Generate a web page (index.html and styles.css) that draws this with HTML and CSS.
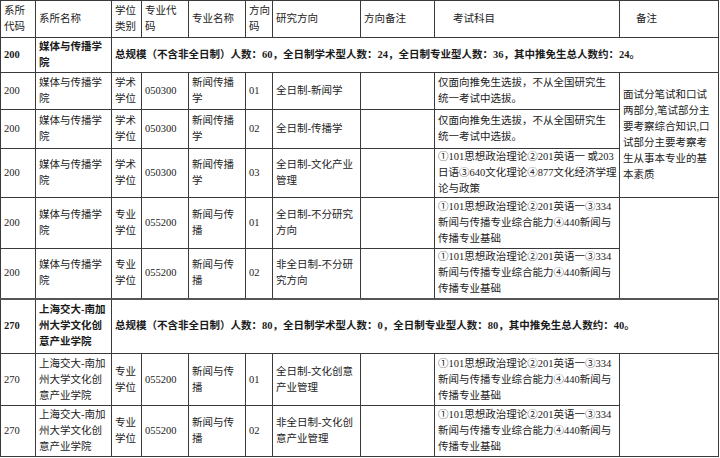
FILE: index.html
```html
<!DOCTYPE html>
<html lang="zh-CN">
<head>
<meta charset="utf-8">
<title>招生目录</title>
<link rel="stylesheet" href="styles.css">
</head>
<body>
<table class="plan">
  <colgroup>
    <col class="c-code">
    <col class="c-name">
    <col class="c-type">
    <col class="c-major-code">
    <col class="c-major">
    <col class="c-dir">
    <col class="c-research">
    <col class="c-note">
    <col class="c-exam">
    <col class="c-remark">
  </colgroup>
  <tbody>
    <tr class="h-head">
      <th>系所<br>代码</th>
      <th>系所名称</th>
      <th>学位<br>类别</th>
      <th>专业代<br>码</th>
      <th>专业名称</th>
      <th>方向<br>码</th>
      <th>研究方向</th>
      <th>方向备注</th>
      <th class="indent-exam">考试科目</th>
      <th class="indent-remark">备注</th>
    </tr>
    <tr class="h-sum1 summary">
      <td>200</td>
      <td>媒体与传播学<br>院</td>
      <td colspan="8">总规模（不含非全日制）人数：60，全日制学术型人数：24，全日制专业型人数：36，其中推免生总人数约：24。</td>
    </tr>
    <tr class="h-r1">
      <td>200</td>
      <td>媒体与传播学<br>院</td>
      <td>学术<br>学位</td>
      <td>050300</td>
      <td>新闻传播<br>学</td>
      <td>01</td>
      <td>全日制-新闻学</td>
      <td></td>
      <td>仅面向推免生选拔，不从全国研究生<br>统一考试中选拔。</td>
      <td rowspan="3" class="remark">面试分笔试和口试<br>两部分,笔试部分主<br>要考察综合知识,口<br>试部分主要考察考<br>生从事本专业的基<br>本素质</td>
    </tr>
    <tr class="h-r2">
      <td>200</td>
      <td>媒体与传播学<br>院</td>
      <td>学术<br>学位</td>
      <td>050300</td>
      <td>新闻传播<br>学</td>
      <td>02</td>
      <td>全日制-传播学</td>
      <td></td>
      <td>仅面向推免生选拔，不从全国研究生<br>统一考试中选拔。</td>
    </tr>
    <tr class="h-r3">
      <td>200</td>
      <td>媒体与传播学<br>院</td>
      <td>学术<br>学位</td>
      <td>050300</td>
      <td>新闻传播<br>学</td>
      <td>03</td>
      <td>全日制-文化产业<br>管理</td>
      <td></td>
      <td>①101思想政治理论②201英语一 或203<br>日语③640文化理论④877文化经济学理<br>论与政策</td>
    </tr>
    <tr class="h-r4">
      <td>200</td>
      <td>媒体与传播学<br>院</td>
      <td>专业<br>学位</td>
      <td>055200</td>
      <td>新闻与传<br>播</td>
      <td>01</td>
      <td>全日制-不分研究<br>方向</td>
      <td></td>
      <td>①101思想政治理论②201英语一③334<br>新闻与传播专业综合能力④440新闻与<br>传播专业基础</td>
      <td rowspan="2"></td>
    </tr>
    <tr class="h-r5">
      <td>200</td>
      <td>媒体与传播学<br>院</td>
      <td>专业<br>学位</td>
      <td>055200</td>
      <td>新闻与传<br>播</td>
      <td>02</td>
      <td>非全日制-不分研<br>究方向</td>
      <td></td>
      <td>①101思想政治理论②201英语一③334<br>新闻与传播专业综合能力④440新闻与<br>传播专业基础</td>
    </tr>
    <tr class="h-sum2 summary split">
      <td>270</td>
      <td>上海交大-南加<br>州大学文化创<br>意产业学院</td>
      <td colspan="8">总规模（不含非全日制）人数：80，全日制学术型人数：0，全日制专业型人数：80，其中推免生总人数约：40。</td>
    </tr>
    <tr class="h-r6">
      <td>270</td>
      <td>上海交大-南加<br>州大学文化创<br>意产业学院</td>
      <td>专业<br>学位</td>
      <td>055200</td>
      <td>新闻与传<br>播</td>
      <td>01</td>
      <td>全日制-文化创意<br>产业管理</td>
      <td></td>
      <td>①101思想政治理论②201英语一③334<br>新闻与传播专业综合能力④440新闻与<br>传播专业基础</td>
      <td rowspan="2"></td>
    </tr>
    <tr class="h-r7">
      <td>270</td>
      <td>上海交大-南加<br>州大学文化创<br>意产业学院</td>
      <td>专业<br>学位</td>
      <td>055200</td>
      <td>新闻与传<br>播</td>
      <td>02</td>
      <td>非全日制-文化创<br>意产业管理</td>
      <td></td>
      <td>①101思想政治理论②201英语一③334<br>新闻与传播专业综合能力④440新闻与<br>传播专业基础</td>
    </tr>
  </tbody>
</table>
</body>
</html>
```

FILE: styles.css
```css
html, body {
  margin: 0;
  padding: 0;
  background: #ffffff;
}

body {
  width: 720px;
  height: 458px;
  overflow: hidden;
  font-family: "Liberation Serif", "Noto Sans CJK SC", serif;
  font-size: 10.5px;
  line-height: 16px;
  color: #222222;
}

.plan {
  table-layout: fixed;
  border-collapse: collapse;
  width: 719px;
}

.c-code { width: 35px; }
.c-name { width: 76px; }
.c-type { width: 30px; }
.c-major-code { width: 47px; }
.c-major { width: 57px; }
.c-dir { width: 27px; }
.c-research { width: 88px; }
.c-note { width: 74px; }
.c-exam { width: 185px; }
.c-remark { width: 99px; }

.plan th,
.plan td {
  border: 1px solid #3a3a3a;
  padding: 0 1px 0 3px;
  text-align: left;
  vertical-align: middle;
  font-weight: normal;
  white-space: nowrap;
  overflow: hidden;
}

.plan th.indent-exam { padding-left: 18px; }
.plan th.indent-remark { padding-left: 16px; }

.summary td {
  font-weight: bold;
  color: #1a1a1a;
}

.split td {
  border-top: 2px solid #555555;
}

.remark {
  color: #222222;
}

.h-head { height: 37px; }
.h-sum1 { height: 35px; }
.h-r1 { height: 37px; }
.h-r2 { height: 39px; }
.h-r3 { height: 49px; }
.h-r4 { height: 51px; }
.h-r5 { height: 50px; }
.h-sum2 { height: 55px; }
.h-r6 { height: 52px; }
.h-r7 { height: 51px; }
```
